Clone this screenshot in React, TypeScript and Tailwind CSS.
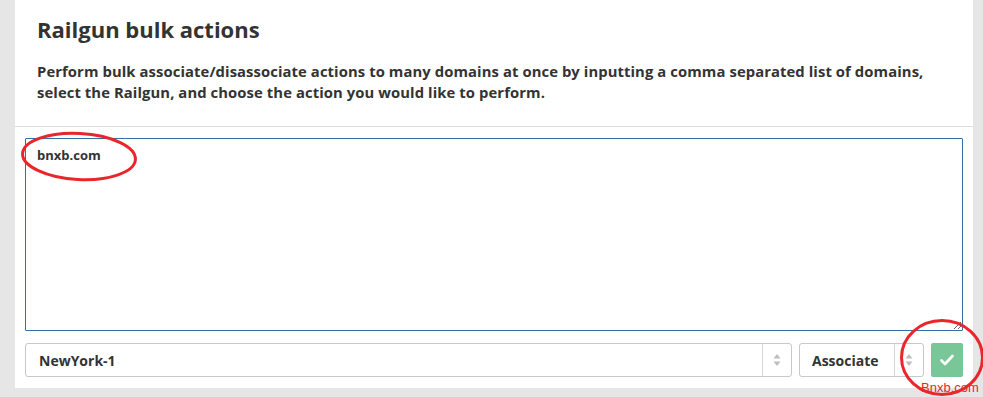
import React from 'react';

function SpinnerArrows() {
  return (
    <svg width="8" height="14" viewBox="0 0 8 14" className="text-[#bdbdbd]">
      <path d="M4 1 L7.5 5.5 H0.5 Z" fill="currentColor" />
      <path d="M4 13 L7.5 8.5 H0.5 Z" fill="currentColor" />
    </svg>
  );
}

function FakeSelect({ label, className, pad }: { label: string; className: string; pad: string }) {
  return (
    <div className={`flex h-[34px] items-stretch rounded-[3px] border border-[#c8c8c8] bg-white ${className}`}>
      <div className={`flex flex-1 items-center text-[14px] font-bold text-[#333] ${pad}`}>{label}</div>
      <div className="flex w-[29px] items-center justify-center border-l border-[#d4d4d4]">
        <SpinnerArrows />
      </div>
    </div>
  );
}

export default function App() {
  return (
    <div
      className="relative h-[397px] w-[983px] overflow-hidden bg-[#e6e6e6] pl-[15px] pr-[10px]"
      style={{ fontFamily: '"Open Sans", "Noto Sans", sans-serif' }}
    >
      <div className="flex h-[388px] flex-col bg-white">
        {/* Header */}
        <div className="h-[127px] border-b border-[#dedede] px-[22px] pt-[14px]">
          <h1 className="text-[22px] leading-[30px] font-bold text-[#333]">Railgun bulk actions</h1>
          <p className="mt-[17px] text-[14.8px] leading-[21px] font-bold tracking-[0.09px] text-[#333]">
            Perform bulk associate/disassociate actions to many domains at once by inputting a comma separated list of domains,
            <br />
            select the Railgun, and choose the action you would like to perform.
          </p>
        </div>

        {/* Body */}
        <div className="flex flex-col gap-[12px] px-[10px] pt-[11px]">
          <textarea
            defaultValue="bnxb.com"
            className="h-[193px] w-full rounded-[1px] border border-[#2d72aa] px-[11px] py-[6px] text-[13px] leading-[20px] font-bold text-[#333] outline-none"
            style={{ fontFamily: '"Open Sans", "Noto Sans", sans-serif' }}
          />
          <div className="flex gap-[7px]">
            <FakeSelect label="NewYork-1" className="flex-1" pad="pl-[13px]" />
            <FakeSelect label="Associate" className="w-[125px]" pad="pl-[12px]" />
            <button className="flex h-[34px] w-[32px] items-center justify-center rounded-[2px] bg-[#79c698]">
              <svg width="14" height="12" viewBox="0 0 14 12">
                <path d="M1.5 6.5 L5 10 L12.5 2" fill="none" stroke="white" strokeWidth="2.6" strokeLinecap="round" strokeLinejoin="round" />
              </svg>
            </button>
          </div>
        </div>
      </div>

      {/* Annotation overlay */}
      <svg className="pointer-events-none absolute inset-0" width="983" height="397">
        <ellipse cx="79" cy="156.5" rx="56.5" ry="23" fill="none" stroke="#e8262b" strokeWidth="3" transform="rotate(3 79 156.5)" />
        <ellipse cx="942" cy="357.5" rx="40.5" ry="37" fill="none" stroke="#e8262b" strokeWidth="3" />
      </svg>
      <div
        className="pointer-events-none absolute left-[921px] top-[380px] text-[13px] leading-[15px] text-[#e8262b]"
        style={{ fontFamily: '"Liberation Sans", Arial, sans-serif' }}
      >
        Bnxb.com
      </div>
    </div>
  );
}
